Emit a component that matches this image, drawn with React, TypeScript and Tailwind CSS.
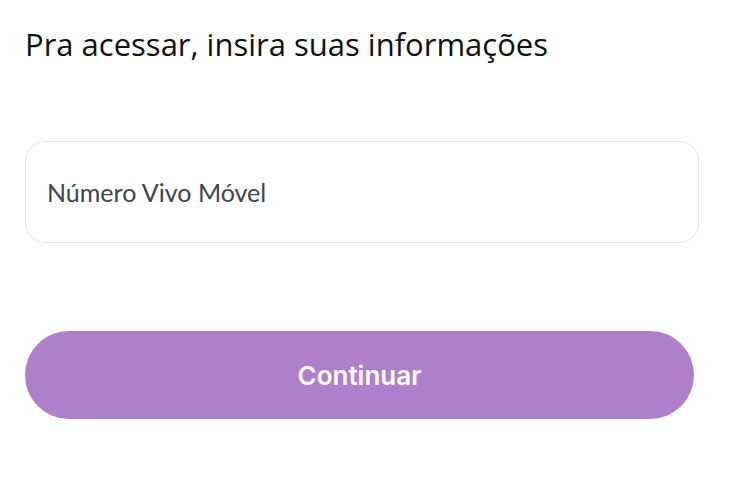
import React, { useState } from 'react';

const App: React.FC = () => {
  const [phone, setPhone] = useState<string>('');

  return (
    <div className="min-h-[500px] w-[740px] bg-white px-[25px] pt-[24px] font-['Open_Sans',sans-serif]">
      <h1 className="text-[31px] leading-[40px] text-[#111]">Pra acessar, insira suas informações</h1>
      <div className="mt-[77px] w-[674px]">
        <input
          className="h-[102px] w-full rounded-[20px] border border-[#e2e2e2] px-[21px] font-['Lato',sans-serif] text-[25px] text-[#333] outline-none placeholder:text-[#3f4450]"
          placeholder="Número Vivo Móvel"
          value={phone}
          onChange={e => setPhone(e.target.value)}
        />
      </div>
      <button className="mt-[88px] flex h-[88px] w-[669px] items-center justify-center rounded-[44px] bg-[#b07fcb] font-['Inter',sans-serif] text-[26px] font-semibold text-white">
        Continuar
      </button>
    </div>
  );
};

export default App;
